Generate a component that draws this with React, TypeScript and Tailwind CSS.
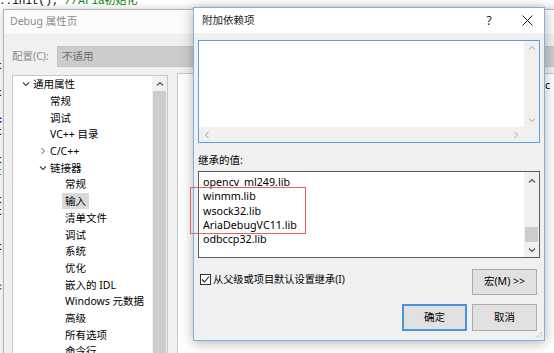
import React from 'react';

function Chev({ dir, c = '#404040', s = 8 }: { dir: 'up' | 'down' | 'left' | 'right'; c?: string; s?: number }) {
  const d =
    dir === 'down'
      ? 'M1 2.5 L4 5.5 L7 2.5'
      : dir === 'up'
      ? 'M1 5.5 L4 2.5 L7 5.5'
      : dir === 'left'
      ? 'M5.5 1 L2.5 4 L5.5 7'
      : 'M2.5 1 L5.5 4 L2.5 7';
  return (
    <svg width={s} height={s} viewBox="0 0 8 8" className="block">
      <path d={d} fill="none" stroke={c} strokeWidth="1.1" />
    </svg>
  );
}

type Item = { t: string; lvl: 1 | 2 | 3; chev?: 'down' | 'right'; sel?: boolean };

const tree: Item[] = [
  { t: '通用属性', lvl: 1, chev: 'down' },
  { t: '常规', lvl: 2 },
  { t: '调试', lvl: 2 },
  { t: 'VC++ 目录', lvl: 2 },
  { t: 'C/C++', lvl: 2, chev: 'right' },
  { t: '链接器', lvl: 2, chev: 'down' },
  { t: '常规', lvl: 3 },
  { t: '输入', lvl: 3, sel: true },
  { t: '清单文件', lvl: 3 },
  { t: '调试', lvl: 3 },
  { t: '系统', lvl: 3 },
  { t: '优化', lvl: 3 },
  { t: '嵌入的 IDL', lvl: 3 },
  { t: 'Windows 元数据', lvl: 3 },
  { t: '高级', lvl: 3 },
  { t: '所有选项', lvl: 3 },
  { t: '命令行', lvl: 3 },
];

const padByLvl = { 1: 'pl-[9px]', 2: 'pl-[26px]', 3: 'pl-[41px]' } as const;

const libs = ['opencv_ml249.lib', 'winmm.lib', 'wsock32.lib', 'AriaDebugVC11.lib', 'odbccp32.lib'];

export default function App() {
  return (
    <div className="relative w-[554px] h-[353px] overflow-hidden bg-white font-[family-name:'Noto_Sans','Noto_Sans_CJK_SC',sans-serif] text-[10.5px] text-black">
      {/* code editor behind */}
      <div className="absolute left-[-1px] top-[-5px] whitespace-nowrap font-[family-name:'Liberation_Mono','Noto_Sans_CJK_SC',monospace] text-[11px] leading-[13px]">
        <span className="text-black">::init(); </span>
        <span className="text-[#008000]">//Aria初始化</span>
      </div>
      <div className="absolute left-0 top-[62px] w-[3px] overflow-hidden font-[family-name:'Liberation_Mono',monospace] text-[10px] leading-[10px] font-bold">
        <div className="-ml-[4px] flex flex-col">
          <span className="h-[27px]">t</span>
          <span className="h-[27px]">t</span>
          <span className="h-[12px] text-[#0000cc]">c</span>
          <span className="h-[28px]">t</span>
          <span className="h-[12px]">t</span>
          <span className="h-[28px] text-[#2b91af]">t</span>
          <span className="h-[12px]">t</span>
          <span className="h-[35px]">t</span>
          <span className="h-[40px]">t</span>
          <span className="h-[14px] text-[#2b91af]">c</span>
        </div>
      </div>

      {/* Debug property page window */}
      <div className="absolute left-[3px] top-[9px] w-[620px] h-[400px] border border-[#b4b4b4] bg-[#f0f0f0] shadow-[0_0_8px_rgba(0,0,0,0.2)] flex flex-col">
        <div className="h-[24px] bg-[#fbfbfb] flex items-center pl-[6px] text-[#8a8a8a] text-[10.5px]">Debug 属性页</div>
        <div className="mt-[12px] flex items-center pl-[8px]">
          <span className="w-[45px] text-[#8c8c8c]">配置(C):</span>
          <div className="flex-1 h-[21px] bg-[#cccccc] border border-[#c4c4c4] flex items-center pl-[4px] text-[#6d6d6d]">不适用</div>
        </div>
        <div className="mt-[8px] flex pl-[8px] gap-[9px]">
          <div className="w-[156px] h-[290px] border border-[#c8c8c8] bg-white flex">
            <div className="flex-1 flex flex-col">
              {tree.map((it, i) => (
                <div key={i} className={`h-[16.7px] flex items-center ${padByLvl[it.lvl]}`}>
                  <div className="w-[11px] flex items-center">
                    {it.chev === 'down' && <Chev dir="down" c="#404040" />}
                    {it.chev === 'right' && <Chev dir="right" c="#9a9a9a" />}
                  </div>
                  <span className={it.sel ? '-ml-[3px] px-[3px] bg-[#d9d9d9] leading-[16px]' : 'leading-[16px]'}>{it.t}</span>
                </div>
              ))}
            </div>
            <div className="w-[15px] bg-[#f0f0f0] flex flex-col">
              <div className="h-[15px] flex items-center justify-center">
                <Chev dir="up" c="#505050" />
              </div>
              <div className="flex-1 mx-[1px] bg-[#cdcdcd]" />
            </div>
          </div>
          <div className="flex-1 h-[292px] -mt-[2px] border border-[#c8c8c8] bg-white pl-[367px] pt-[4px]">
            <span className="text-[10.5px]">c</span>
          </div>
        </div>
      </div>

      {/* Additional dependencies dialog */}
      <div className="absolute left-[193px] top-[7px] w-[352px] h-[334px] border border-[#7fb0e4] bg-[#f0f0f0] shadow-[0_2px_12px_rgba(0,0,0,0.3)] flex flex-col">
        <div className="h-[25px] bg-white flex items-center">
          <span className="pl-[8px] flex-1 text-[#1a1a1a]">附加依赖项</span>
          <div className="w-[30px] flex justify-center text-[12px] text-[#1a1a1a]">?</div>
          <div className="w-[6px]" />
          <div className="w-[34px] flex justify-center">
            <svg width="11" height="11" viewBox="0 0 11 11">
              <path d="M0.5 0.5 L10.5 10.5 M10.5 0.5 L0.5 10.5" stroke="#1a1a1a" strokeWidth="1" />
            </svg>
          </div>
        </div>

        <div className="mt-[7px] mx-[4px] h-[103px] border border-[#5b9fe0] flex flex-col">
          <div className="flex flex-1">
            <div className="flex-1 bg-white" />
            <div className="w-[15px] bg-[#f0f0f0] flex flex-col items-center justify-between py-[3px]">
              <Chev dir="up" c="#c2c2c2" />
              <Chev dir="down" c="#c2c2c2" />
            </div>
          </div>
          <div className="h-[15px] flex bg-[#f0f0f0]">
            <div className="flex-1 flex items-center justify-between px-[4px]">
              <Chev dir="left" c="#c2c2c2" />
              <Chev dir="right" c="#c2c2c2" />
            </div>
            <div className="w-[15px]" />
          </div>
        </div>

        <div className="mt-[10px] mx-[4px] h-[14px] leading-[14px]">继承的值:</div>

        <div className="mt-[4px] mx-[4px] h-[87px] border border-[#5a5a5a] bg-white flex">
          <div className="flex-1 flex flex-col pt-[3px] pl-[4px]">
            {libs.map((l) => (
              <div key={l} className="h-[14.3px] leading-[14.3px] text-[10.7px]">{l}</div>
            ))}
          </div>
          <div className="w-[15px] bg-[#f0f0f0] flex flex-col">
            <div className="h-[17px] flex items-center justify-center">
              <Chev dir="up" c="#505050" />
            </div>
            <div className="flex-1" />
            <div className="h-[15px] mx-[1px] bg-[#cdcdcd]" />
            <div className="h-[15px] flex items-center justify-center">
              <Chev dir="down" c="#505050" />
            </div>
          </div>
        </div>

        <div className="mt-[11px] flex items-start pl-[6px] pr-[7px]">
          <div className="mt-[4px] flex items-center flex-1">
            <div className="w-[11px] h-[11px] border border-[#333333] bg-white flex items-center justify-center">
              <svg width="9" height="9" viewBox="0 0 9 9">
                <path d="M1 4.5 L3.5 7 L8 1.5" fill="none" stroke="#222" strokeWidth="1.1" />
              </svg>
            </div>
            <span className="ml-[2px] leading-[12px] text-[10.2px]">从父级或项目默认设置继承(I)</span>
          </div>
          <div className="w-[65px] h-[26px] bg-[#e1e1e1] border border-[#adadad] flex items-center justify-center">宏(M) &gt;&gt;</div>
        </div>

        <div className="mt-[9px] flex justify-end gap-[5px] pr-[7px]">
          <div className="w-[65px] h-[27px] bg-[#e1e1e1] border-2 border-[#4a93dc] flex items-center justify-center">确定</div>
          <div className="w-[65px] h-[27px] bg-[#e1e1e1] border border-[#adadad] flex items-center justify-center">取消</div>
        </div>

        <div className="absolute right-[1px] bottom-[1px]">
          <svg width="9" height="9" viewBox="0 0 9 9">
            <path d="M8 2 L2 8 M8 5 L5 8" stroke="#a0a0a0" strokeWidth="1" strokeDasharray="1 1" />
          </svg>
        </div>
      </div>

      {/* red annotation box */}
      <div className="absolute left-[190px] top-[187px] w-[116px] h-[47px] border border-[#e06363]" />
    </div>
  );
}
